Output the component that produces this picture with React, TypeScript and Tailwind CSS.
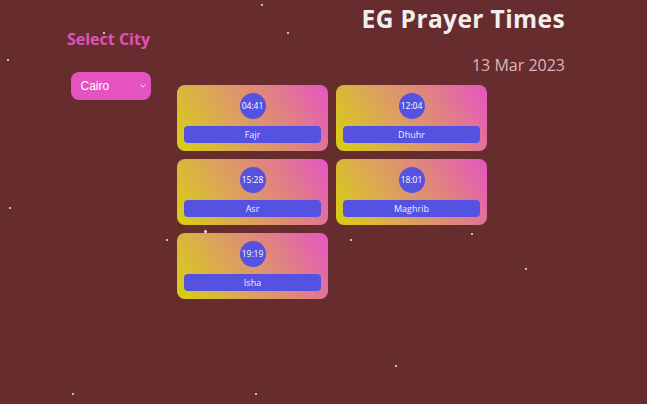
import React from "react";

const stars: [number, number, number][] = [
  [261, 4, 2],
  [287, 32, 2],
  [103, 32, 2],
  [7, 59, 2],
  [9, 207, 2],
  [204, 230, 3],
  [166, 239, 2],
  [350, 239, 2],
  [471, 233, 2],
  [525, 268, 2],
  [395, 365, 2],
  [72, 393, 2],
  [255, 393, 2],
];

const prayers = [
  { name: "Fajr", time: "04:41" },
  { name: "Dhuhr", time: "12:04" },
  { name: "Asr", time: "15:28" },
  { name: "Maghrib", time: "18:01" },
  { name: "Isha", time: "19:19" },
];

export default function App() {
  return (
    <div
      className="relative flex h-[404px] w-full overflow-hidden bg-[#672d2e]"
      style={{ fontFamily: '"Open Sans", "Noto Sans", sans-serif' }}
    >
      {stars.map(([x, y, s], i) => (
        <div
          key={i}
          className="absolute rounded-full bg-white/90"
          style={{ left: x, top: y, width: s, height: s }}
        />
      ))}

      <aside className="flex w-[177px] shrink-0 flex-col items-center pl-[40px] pt-[27px]">
        <div className="text-[16px] font-bold leading-6 text-[#e052b8]">Select City</div>
        <div className="ml-[4px] mt-[21px] flex h-[28px] w-[80px] items-center justify-between rounded-lg bg-[#e553c0] pl-[10px] pr-[4px]">
          <span
            className="text-[12px] text-white"
            style={{ fontFamily: '"Liberation Sans", Arial, sans-serif' }}
          >
            Cairo
          </span>
          <svg width="6" height="4" viewBox="0 0 6 4" className="mr-[1px]">
            <path d="M0.5 0.5 L3 3 L5.5 0.5" fill="none" stroke="#f5d6ee" strokeWidth="1" />
          </svg>
        </div>
      </aside>

      <main className="flex flex-1 flex-col pr-[82px] pt-[3px]">
        <h1 className="self-end text-[24.5px] font-bold leading-8 tracking-[0.4px] text-[#f3eeee]">
          EG Prayer Times
        </h1>
        <div className="mt-[18px] self-end text-[16px] leading-6 text-[#d9b8b7]">13 Mar 2023</div>
        <div className="mt-[8px] grid grid-cols-[151px_151px] gap-x-[8px] gap-y-[8px]">
          {prayers.map((p) => (
            <div
              key={p.name}
              className="flex h-[66px] flex-col items-center rounded-lg bg-[linear-gradient(58deg,#d7d010_0%,#dca45a_38%,#e07e86_70%,#e654c6_100%)] px-[7px] pt-[8px]"
            >
              <div className="flex h-[26px] w-[26px] items-center justify-center rounded-full bg-[#5552e1] text-[8.5px] font-medium text-white">
                {p.time}
              </div>
              <div className="mt-[7px] flex h-[17px] w-full items-center justify-center rounded bg-[#5552e1] text-[9px] font-medium text-[#f3eefa]">
                {p.name}
              </div>
            </div>
          ))}
        </div>
      </main>
    </div>
  );
}
